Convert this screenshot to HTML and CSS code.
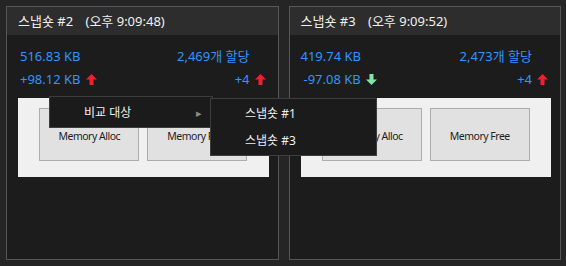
FILE: index.html
```html
<!doctype html>
<html lang="ko">
<head>
  <meta charset="utf-8">
  <title>스냅숏</title>
  <link rel="stylesheet" href="styles.css">
</head>
<body>
  <div class="panels">
    <div class="panel">
      <div class="panelHeader">
        <span>스냅숏 #2</span>
        <span class="time">(오후 9:09:48)</span>
      </div>
      <div class="stats">
        <div class="row first">
          <span>516.83 KB</span>
          <span>2,469개 할당</span>
        </div>
        <div class="row second">
          <span class="diff">+98.12 KB
            <svg class="arrow" width="11" height="11" viewBox="0 0 11 11"><path d="M5.5 0 L11 5.5 L7.5 5.5 L7.5 11 L3.5 11 L3.5 5.5 L0 5.5 Z" fill="#f0202e"/></svg>
          </span>
          <span class="diff">+4
            <svg class="arrow" width="11" height="11" viewBox="0 0 11 11"><path d="M5.5 0 L11 5.5 L7.5 5.5 L7.5 11 L3.5 11 L3.5 5.5 L0 5.5 Z" fill="#f0202e"/></svg>
          </span>
        </div>
      </div>
      <div class="chart">
        <button class="btn">Memory Alloc</button>
        <button class="btn">Memory Free</button>
      </div>
    </div>

    <div class="panel">
      <div class="panelHeader">
        <span>스냅숏 #3</span>
        <span class="time">(오후 9:09:52)</span>
      </div>
      <div class="stats">
        <div class="row first">
          <span>419.74 KB</span>
          <span>2,473개 할당</span>
        </div>
        <div class="row second">
          <span class="diff minus">-97.08 KB
            <svg class="arrow" width="11" height="11" viewBox="0 0 11 11"><path d="M5.5 11 L11 5.5 L7.5 5.5 L7.5 0 L3.5 0 L3.5 5.5 L0 5.5 Z" fill="#86e3a8"/></svg>
          </span>
          <span class="diff">+4
            <svg class="arrow" width="11" height="11" viewBox="0 0 11 11"><path d="M5.5 0 L11 5.5 L7.5 5.5 L7.5 11 L3.5 11 L3.5 5.5 L0 5.5 Z" fill="#f0202e"/></svg>
          </span>
        </div>
      </div>
      <div class="chart">
        <button class="btn">Memory Alloc</button>
        <button class="btn">Memory Free</button>
      </div>
    </div>
  </div>

  <div class="menu">
    <div class="menuItem">비교 대상<span class="sub">&#9656;</span></div>
  </div>
  <div class="menu subMenu">
    <div class="menuItem">스냅숏 #1</div>
    <div class="menuItem">스냅숏 #3</div>
  </div>
</body>
</html>
```

FILE: styles.css
```css
:root{
  --page-bg:#252526;
  --panel-bg:#1c1c1c;
  --header-bg:#2d2d2e;
  --border:#555555;
  --blue:#3393ff;
}
body{
  margin:0;
  background:var(--page-bg);
  font-family:"Noto Sans","Noto Sans CJK KR",sans-serif;
  color:#f0f0f0;
  height:266px;
  overflow:hidden;
}
.panels{
  display:flex;
  gap:10px;
  padding:6px 5px 6px 6px;
  height:254px;
}
.panel{
  flex:1;
  border:1px solid var(--border);
  background:var(--panel-bg);
  display:flex;
  flex-direction:column;
}
.panelHeader{
  background:var(--header-bg);
  height:28px;
  line-height:28px;
  font-size:13px;
  padding-left:11px;
}
.time{
  margin-left:9px;
}
.stats{
  padding:10px 0 0 13px;
  color:var(--blue);
  font-size:13px;
}
.panel + .panel .stats{
  padding-left:11px;
}
.row{
  display:flex;
  justify-content:space-between;
  height:23px;
  line-height:23px;
}
.row.first{
  padding-right:28px;
}
.row.second{
  padding-right:12px;
}
.diff{
  display:flex;
  align-items:center;
  gap:5px;
}
.minus{
  padding-left:3px;
}
.arrow{
  display:block;
}
.chart{
  margin:7px 9px 0 11px;
  background:#f0f0f0;
  height:79px;
  display:flex;
  justify-content:center;
  gap:8px;
  padding-top:10px;
  box-sizing:border-box;
}
.btn{
  width:100px;
  height:53px;
  background:#e1e1e1;
  border:1px solid #adadad;
  font-family:"Noto Sans",sans-serif;
  font-size:10.5px;
  letter-spacing:-0.5px;
  color:#1e1e1e;
  padding:3px 0 0;
}
.menu{
  position:absolute;
  left:49px;
  top:96px;
  width:162px;
  height:30px;
  background:#1b1b1b;
  border:1px solid #3d3d3d;
  font-size:12px;
}
.menuItem{
  position:relative;
  height:27px;
  line-height:27px;
  padding-left:34px;
  padding-top:2px;
}
.sub{
  position:absolute;
  right:10px;
  top:2px;
  color:#8a8a8a;
  font-size:11px;
}
.subMenu{
  left:210px;
  top:98px;
  width:165px;
  height:55px;
  padding-top:1px;
}
.subMenu .menuItem{
  padding-left:34px;
  padding-top:0;
}
```
